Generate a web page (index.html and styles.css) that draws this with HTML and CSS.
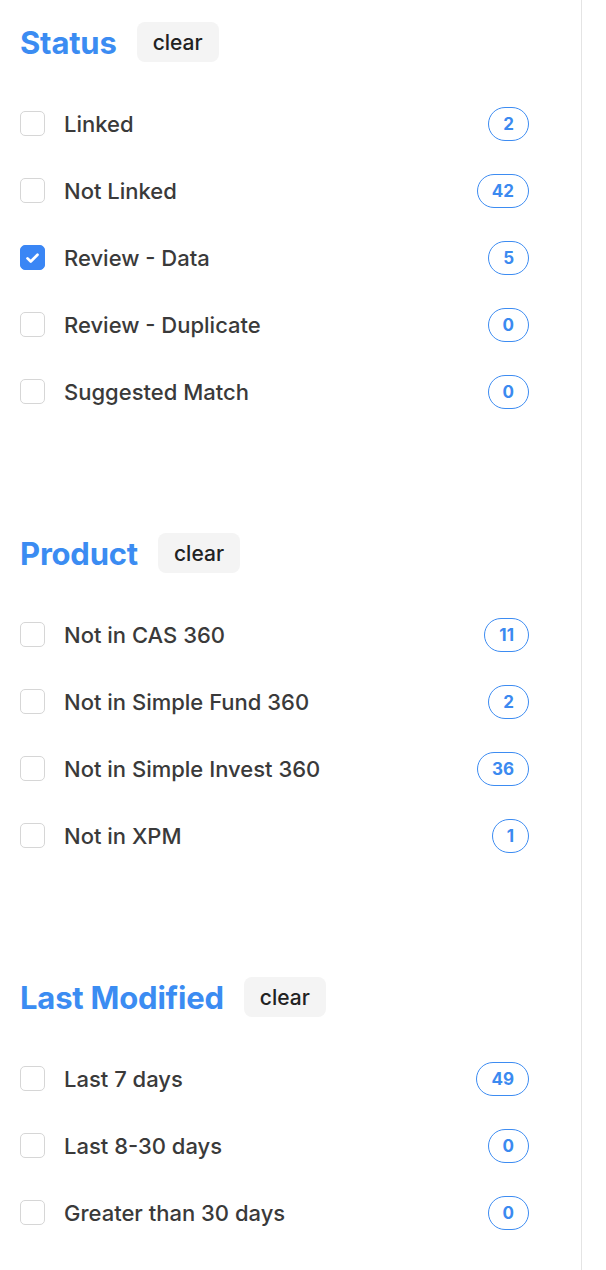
FILE: index.html
```html
<!DOCTYPE html>
<html>
<head>
<meta charset="utf-8">
<link rel="stylesheet" href="styles.css">
</head>
<body>
<aside class="sidebar">
  <section class="group">
    <div class="group-head"><h2 class="group-title">Status</h2><button class="clear">clear</button></div>
    <ul class="options">
      <li class="option"><span class="box"></span><span class="label">Linked</span><span class="count">2</span></li>
      <li class="option"><span class="box"></span><span class="label">Not Linked</span><span class="count">42</span></li>
      <li class="option"><span class="box checked"><svg viewBox="0 0 24 24" width="24" height="24"><path d="M6.8 12.4l3.4 3.3L17.2 8.6" fill="none" stroke="#fff" stroke-width="2.8" stroke-linecap="round" stroke-linejoin="round"/></svg></span><span class="label">Review - Data</span><span class="count">5</span></li>
      <li class="option"><span class="box"></span><span class="label">Review - Duplicate</span><span class="count">0</span></li>
      <li class="option"><span class="box"></span><span class="label">Suggested Match</span><span class="count">0</span></li>
    </ul>
  </section>
  <section class="group">
    <div class="group-head"><h2 class="group-title">Product</h2><button class="clear">clear</button></div>
    <ul class="options">
      <li class="option"><span class="box"></span><span class="label">Not in CAS 360</span><span class="count">11</span></li>
      <li class="option"><span class="box"></span><span class="label">Not in Simple Fund 360</span><span class="count">2</span></li>
      <li class="option"><span class="box"></span><span class="label">Not in Simple Invest 360</span><span class="count">36</span></li>
      <li class="option"><span class="box"></span><span class="label">Not in XPM</span><span class="count">1</span></li>
    </ul>
  </section>
  <section class="group">
    <div class="group-head"><h2 class="group-title">Last Modified</h2><button class="clear">clear</button></div>
    <ul class="options">
      <li class="option"><span class="box"></span><span class="label">Last 7 days</span><span class="count">49</span></li>
      <li class="option"><span class="box"></span><span class="label">Last 8-30 days</span><span class="count">0</span></li>
      <li class="option"><span class="box"></span><span class="label">Greater than 30 days</span><span class="count">0</span></li>
    </ul>
  </section>
</aside>
</body>
</html>
```
FILE: styles.css
```css
html, body {
  margin: 0;
  padding: 0;
  background: #fff;
}
body {
  font-family: Inter, "Liberation Sans", sans-serif;
  color: #3a3a3a;
}
.sidebar {
  box-sizing: border-box;
  width: 582px;
  min-height: 100vh;
  border-right: 1px solid #e4e4e4;
  padding: 22px 52px 0 20px;
}
.group {
  margin-bottom: 108px;
}
.group-head {
  display: flex;
  align-items: center;
  gap: 20px;
  height: 40px;
  margin-bottom: 28px;
}
.group-title {
  margin: 0;
  font-size: 31px;
  font-weight: 700;
  color: #3b8cf2;
  letter-spacing: -0.2px;
}
.clear {
  height: 40px;
  padding: 0 16px;
  border: none;
  border-radius: 8px;
  background: #f4f4f4;
  font-family: inherit;
  font-size: 21px;
  font-weight: 500;
  color: #222;
}
.options {
  list-style: none;
  margin: 0;
  padding: 0;
}
.option {
  display: flex;
  align-items: center;
  height: 67px;
}
.box {
  box-sizing: border-box;
  width: 25px;
  height: 25px;
  border: 1px solid #d6d6d6;
  border-radius: 5px;
  background: #fff;
  margin-right: 19px;
  flex: none;
  display: flex;
  align-items: center;
  justify-content: center;
}
.box.checked {
  background: #3a86f5;
  border-color: #3a86f5;
}
.box svg {
  display: block;
}
.label {
  flex: 1;
  font-size: 22px;
  font-weight: 500;
  color: #3a3a3a;
}
.count {
  box-sizing: border-box;
  height: 34px;
  padding: 0 14px;
  border: 1px solid #3d8cf2;
  border-radius: 17px;
  display: flex;
  align-items: center;
  justify-content: center;
  font-size: 17px;
  font-weight: 700;
  color: #3b8af0;
}
```
